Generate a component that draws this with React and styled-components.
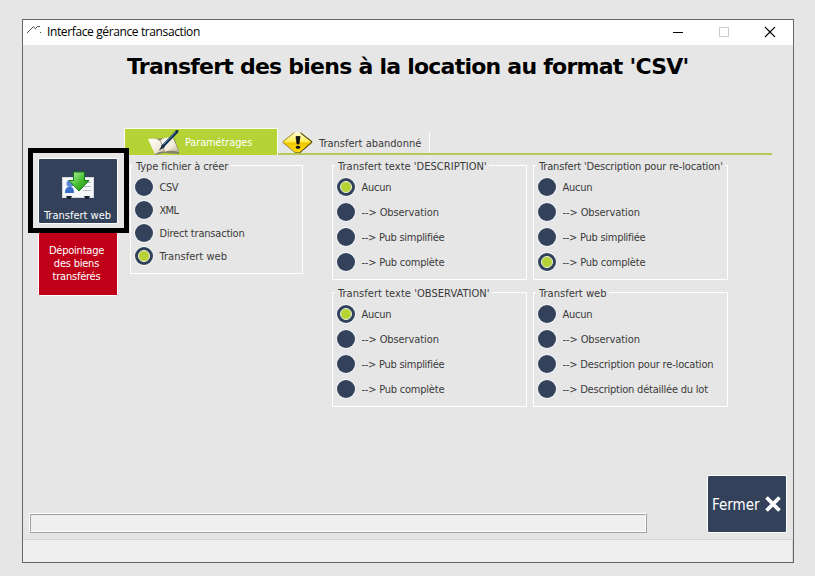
import React from "react";
import styled, { createGlobalStyle, css } from "styled-components";

const GlobalStyle = createGlobalStyle`
  body { margin: 0; background: #e6e6e6; }
  *, *::before, *::after { box-sizing: border-box; }
`;

const navy = "#33425a";
const lime = "#b5d334";

const Desktop = styled.div`
  width: 815px;
  height: 576px;
  padding: 19px 0 0 22px;
  background: #e6e6e6;
  overflow: hidden;
  font: 11px/14px "DejaVu Sans Condensed", "DejaVu Sans", sans-serif;
  font-stretch: condensed;
  color: #3a3a3a;
`;
const Window = styled.div`
  width: 772px;
  height: 544px;
  border: 1px solid #666;
  display: flex;
  flex-direction: column;
`;
const TitleBar = styled.header`
  height: 25px;
  flex: none;
  display: flex;
  align-items: center;
  background: #fff;
  padding: 0 17px 2px 4px;
`;
const WindowTitle = styled.span`
  font: 12px/16px "Open Sans", "Noto Sans", sans-serif;
  letter-spacing: -0.38px;
  color: #000;
  margin-left: 5px;
  flex: 1;
`;
const Controls = styled.div`
  display: flex;
  gap: 34px;
`;
const Heading = styled.h1`
  margin: 0;
  height: 83px;
  flex: none;
  padding: 7px 0 0 104px;
  font: bold 22px/30px "DejaVu Sans", sans-serif;
  font-stretch: normal;
  letter-spacing: -0.76px;
  white-space: nowrap;
  color: #000;
`;
const Main = styled.main`
  height: 347px;
  flex: none;
  display: flex;
  gap: 6px;
  padding-left: 15px;
`;
const Side = styled.aside`
  width: 80px;
  padding-top: 30px;
  display: flex;
  flex-direction: column;
  gap: 9px;
`;
const button = css`
  border: 1px solid #fff;
  border-radius: 2px;
  padding: 0;
  margin: 0;
  color: #fff;
  font: inherit;
  display: flex;
  align-items: center;
`;
const TransferButton = styled.button`
  ${button}
  position: relative;
  height: 66px;
  background: ${navy};
  flex-direction: column;
  justify-content: flex-end;
  gap: 8px;
  padding-right: 1px;
`;
const Highlight = styled.span`
  position: absolute;
  inset: -11px -12px -10px -11px;
  border: 5px solid #000;
  pointer-events: none;
`;
const RedButton = styled.button`
  ${button}
  height: 63px;
  border-top-color: #c00018;
  background: #c00018;
  justify-content: center;
  text-align: center;
  line-height: 13px;
  letter-spacing: -0.22px;
  padding: 0 3px 3px 0;
`;
const Panel = styled.section`
  width: 648px;
`;
const Tabs = styled.div`
  height: 27px;
  display: flex;
  border-bottom: 2px solid #b4ca52;
`;
const Tab = styled.div`
  display: flex;
  align-items: center;
  ${(p) =>
    p.$active
      ? css`
          width: 154px;
          height: 27px;
          padding-left: 23px;
          gap: 5px;
          background: ${lime};
          border: 1px solid #fbfdf0;
          border-bottom: 0;
          color: #fff;
          letter-spacing: -0.14px;
        `
      : css`
          width: 152px;
          height: 21px;
          margin-top: 4px;
          padding-left: 4px;
          gap: 6px;
          border-right: 1px solid #fff;
          letter-spacing: 0;
        `}
  & > svg { flex: none; }
`;
const TabText = styled.span`
  padding-top: 2px;
`;
const Groups = styled.div`
  padding: 10px 0 0 6px;
  display: grid;
  grid-template-columns: 196px 195px 195px;
  grid-template-rows: 115px 115px;
  gap: 12px 6px;
`;
const Group = styled.div`
  border: 1px solid #fff;
  padding-left: 4px;
  ${(p) => p.$first && css`grid-row: 1 / 3; height: 109px; width: 173px;`}
`;
const Legend = styled.div`
  width: fit-content;
  height: 14px;
  margin: -6px 0 4px -2px;
  padding: 0 2px 0 3px;
  background: #e6e6e6;
  white-space: nowrap;
  letter-spacing: ${(p) => p.$track}px;
`;
const Options = styled.div`
  display: flex;
  flex-direction: column;
  gap: ${(p) => p.$gap}px;
`;
const Option = styled.label`
  height: 18px;
  display: flex;
  align-items: center;
  gap: 6.5px;
  line-height: 16px;
  white-space: nowrap;
  letter-spacing: ${(p) => p.$track}px;
`;
const OptionText = styled.span`
  padding-top: 2px;
`;
const Radio = styled.span`
  width: 18px;
  height: 18px;
  flex: none;
  border-radius: 50%;
  background: ${navy};
  box-shadow: 0 0 0 1px rgba(244, 248, 252, 0.75);
  display: grid;
  place-items: center;
  &::after {
    content: "";
    display: ${(p) => (p.$on ? "block" : "none")};
    width: 12px;
    height: 12px;
    border-radius: 50%;
    border: 1px solid #eef2e2;
    background: ${lime};
  }
`;
const Bottom = styled.div`
  flex: 1;
  display: flex;
  justify-content: space-between;
  padding: 0 6px 0 6px;
`;
const Progress = styled.div`
  width: 618px;
  height: 20px;
  margin-top: 38px;
  border: 1px solid;
  border-color: #fff #a0a0a0 #a0a0a0 #fff;
  background: #efefef;
  &::before {
    content: "";
    display: block;
    height: 18px;
    border: 1px solid;
    border-color: #a0a0a0 #fff #fff #a0a0a0;
  }
`;
const CloseButton = styled.button`
  ${button}
  width: 80px;
  height: 58px;
  background: ${navy};
  padding-left: 4px;
  gap: 4px;
  font-size: 15px;
`;
const CloseText = styled.span`
  padding-top: 1px;
`;
const StatusBar = styled.footer`
  height: 23px;
  flex: none;
  background: #efefef;
  border-top: 1px solid #d5d5d5;
  padding-top: 1px;
  &::after {
    content: "";
    display: block;
    height: 21px;
    border-right: 1px solid #d5d5d5;
  }
`;

const AppIcon = () => (
  <svg width="15" height="13" viewBox="0 0 15 13" fill="none" stroke="#555" strokeWidth="1">
    <path d="M0 8 6.500 1.500 9 4.500M8.500 3.500 10.500 1.500H13" />
    <path d="M13 7.500h1" />
  </svg>
);
const MinIcon = () => (
  <svg width="12" height="12"><path d="M1 6.500h10" stroke="#000" /></svg>
);
const MaxIcon = () => (
  <svg width="12" height="12"><rect x="1.500" y="1.500" width="9" height="9" fill="none" stroke="#ccc" /></svg>
);
const XIcon = () => (
  <svg width="12" height="12"><path d="M1 1l10 10M11 1L1 11" stroke="#000" strokeWidth="1.100" /></svg>
);
const CloseCross = () => (
  <svg width="18" height="18" viewBox="0 0 18 18">
    <path d="M2.500 2.500l13 13M15.500 2.500l-13 13" stroke="#fff" strokeWidth="3.800" />
  </svg>
);
const BookIcon = () => (
  <svg width="32" height="25" viewBox="0 0 32 25">
    <defs>
      <linearGradient id="page" x1="0" y1="0" x2="1" y2="1">
        <stop offset="0" stopColor="#fffef6" />
        <stop offset="0.6" stopColor="#f1ecdc" />
        <stop offset="1" stopColor="#b9b098" />
      </linearGradient>
    </defs>
    <path d="M0 9l2 1 5 15 9-2 15 1V21L26 8z" fill="#88806a" />
    <path d="M0 9c5-1 9-1 12 2l5 11c-4-1-7 0-10 2.500z" fill="url(#page)" />
    <path d="M12 11c3-4 8-4 13-3l6 14c-5-1-10-2-14 0z" fill="url(#page)" />
    <path d="M12.500 11l4.500 11" stroke="#a79e88" />
    <path d="M11 20.500l3-5.500 3 2z" fill="#222c3b" />
    <path d="M15 16L29 1.500" stroke="#102d4c" strokeWidth="3" strokeLinecap="round" />
    <path d="M15.500 14.500L27.500 2" stroke="#6298c5" strokeWidth="1" />
  </svg>
);
const WarnIcon = () => (
  <svg width="31" height="21" viewBox="0 0 31 21">
    <defs>
      <linearGradient id="warn" x1="0" y1="0" x2="0" y2="1">
        <stop offset="0" stopColor="#fffbd8" />
        <stop offset="0.45" stopColor="#ffef50" />
        <stop offset="0.52" stopColor="#efc600" />
        <stop offset="1" stopColor="#ffdc10" />
      </linearGradient>
    </defs>
    <path d="M12.500 .5h6L30 9.500v1L18 20.500h-5L1 10.500v-1z" fill="url(#warn)" />
    <path d="M12.500 .5h6" stroke="#f7f3cc" />
    <path d="M12.500 .5L1 9.500v1l12 10h5l12-10v-1L18.500 .5" fill="none" stroke="#98851f" />
    <path d="M18.500 1L30 10 18 20.500" fill="none" stroke="#4a3d0a" />
    <path d="M14 4.500h4l-1 7.500h-2z" fill="#111" stroke="#111" strokeWidth=".8" />
    <ellipse cx="16" cy="15.300" rx="2.400" ry="1.500" fill="#111" />
  </svg>
);
const CardIcon = () => (
  <svg width="32" height="30" viewBox="0 0 32 30">
    <defs>
      <linearGradient id="arrow" x1="0" y1="0" x2="1" y2="1">
        <stop offset="0" stopColor="#c5f5b0" />
        <stop offset="0.5" stopColor="#4cc136" />
        <stop offset="1" stopColor="#128c12" />
      </linearGradient>
    </defs>
    <rect x=".5" y="6.500" width="31" height="20" fill="#f6f7f9" stroke="#d3d8df" />
    <path d="M22 11.500h7M22 15.500h7M21 19.500h8" stroke="#b9bec6" />
    <circle cx="8" cy="12.500" r="3.500" fill="#5d88d6" />
    <path d="M3 22c0-5 2-6 5-6s4 2 4 6z" fill="#386cc8" />
    <path d="M4 25h6l-1.500 3h-3zM22 25h6l-1.500 3h-3z" fill="#17202e" />
    <path d="M11.500 1h11v8.500h4.500L17 20 7 9.500h4.500z" fill="url(#arrow)" stroke="#0c7a10" />
  </svg>
);

const standardItems = (selected) =>
  [
    ["Aucun", -0.25],
    ["--> Observation", -0.1],
    ["--> Pub simplifiée", -0.27],
    ["--> Pub complète", -0.22],
  ].map(([text, track], i) => [text, track, i === selected]);

const groups = [
  {
    title: "Type fichier à créer", track: -0.11, first: true,
    items: [["CSV", -0.5], ["XML", -0.7], ["Direct transaction", -0.2], ["Transfert web", 0.03, true]],
  },
  { title: "Transfert texte 'DESCRIPTION'", track: 0.03, items: standardItems(0) },
  { title: "Transfert 'Description pour re-location'", track: -0.16, items: standardItems(3) },
  { title: "Transfert texte 'OBSERVATION'", track: 0.05, items: standardItems(0) },
  {
    title: "Transfert web", track: 0.03,
    items: [["Aucun", -0.25], ["--> Observation", -0.1], ["--> Description pour re-location", -0.18], ["--> Description détaillée du lot", -0.22]],
  },
];

export default function App() {
  return (
    <Desktop>
      <GlobalStyle />
      <Window>
        <TitleBar>
          <AppIcon />
          <WindowTitle>Interface gérance transaction</WindowTitle>
          <Controls><MinIcon /><MaxIcon /><XIcon /></Controls>
        </TitleBar>
        <Heading>Transfert des biens à la location au format 'CSV'</Heading>
        <Main>
          <Side>
            <TransferButton>
              <CardIcon />
              Transfert web
              <Highlight />
            </TransferButton>
            <RedButton>Dépointage<br />des biens<br />transférés</RedButton>
          </Side>
          <Panel>
            <Tabs>
              <Tab $active><BookIcon /><TabText>Paramétrages</TabText></Tab>
              <Tab><WarnIcon /><TabText>Transfert abandonné</TabText></Tab>
            </Tabs>
            <Groups>
              {groups.map((g) => (
                <Group key={g.title} $first={g.first}>
                  <Legend $track={g.track}>{g.title}</Legend>
                  <Options $gap={g.first ? 5 : 7}>
                    {g.items.map(([text, track, on]) => (
                      <Option key={text} $track={track}>
                        <Radio $on={on} />
                        <OptionText>{text}</OptionText>
                      </Option>
                    ))}
                  </Options>
                </Group>
              ))}
            </Groups>
          </Panel>
        </Main>
        <Bottom>
          <Progress />
          <CloseButton><CloseText>Fermer</CloseText><CloseCross /></CloseButton>
        </Bottom>
        <StatusBar />
      </Window>
    </Desktop>
  );
}
